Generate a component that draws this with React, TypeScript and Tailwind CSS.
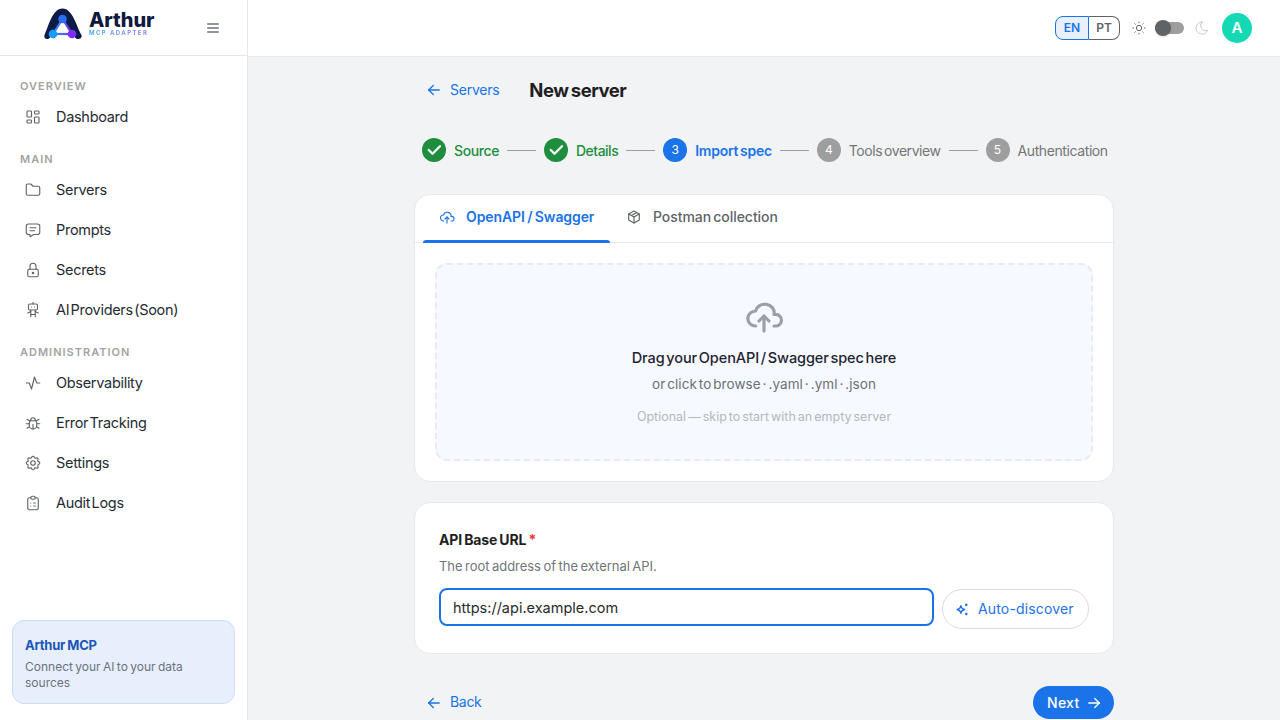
import React from 'react';
import {
  TbLayoutDashboard,
  TbFolder,
  TbMessage,
  TbLock,
  TbRobot,
  TbActivity,
  TbBug,
  TbSettings,
  TbClipboardList,
  TbMenu2,
  TbSun,
  TbMoon,
  TbArrowLeft,
  TbArrowRight,
  TbCheck,
  TbCloudUpload,
  TbPackage,
} from 'react-icons/tb';

const font = "font-['Inter','Liberation_Sans',sans-serif]";

const navSections = [
  { label: 'OVERVIEW', items: [{ icon: TbLayoutDashboard, name: 'Dashboard' }] },
  {
    label: 'MAIN',
    items: [
      { icon: TbFolder, name: 'Servers' },
      { icon: TbMessage, name: 'Prompts' },
      { icon: TbLock, name: 'Secrets' },
      { icon: TbRobot, name: 'AI Providers (Soon)' },
    ],
  },
  {
    label: 'ADMINISTRATION',
    items: [
      { icon: TbActivity, name: 'Observability' },
      { icon: TbBug, name: 'Error Tracking' },
      { icon: TbSettings, name: 'Settings' },
      { icon: TbClipboardList, name: 'Audit Logs' },
    ],
  },
];

const Logo = () => (
  <svg width="38" height="32" viewBox="0 0 38 32" fill="none" className="self-start mt-[8px] shrink-0">
    <defs>
      <linearGradient id="tri" x1="8" y1="26" x2="29" y2="26" gradientUnits="userSpaceOnUse">
        <stop stopColor="#1a9bff" />
        <stop offset="1" stopColor="#7c2dff" />
      </linearGradient>
    </defs>
    <path
      d="M.5 27C4 20 8 .5 18.500 .5C29 .5 33 20 37.500 27C38.500 30 35 32 32 30.500L28 27H9L5 30.500C2 32-.5 30 .5 27Z"
      fill="#0f1b47"
    />
    <path d="M18.500 11L28 26H9Z" fill="#fff" stroke="url(#tri)" strokeWidth="2.200" strokeLinejoin="round" />
    <path d="M5 31L9 26H28L32 31Z" fill="#fff" />
    <path d="M9 26H28" stroke="url(#tri)" strokeWidth="2.200" />
    <circle cx="18.500" cy="11" r="4.300" fill="#2b6ff0" />
    <circle cx="9" cy="26" r="4.300" fill="#1a9bff" />
    <circle cx="28" cy="26" r="4.300" fill="#7c2dff" />
  </svg>
);

const Sidebar = () => (
  <aside className="w-[248px] shrink-0 h-screen bg-white border-r border-[#e5e7eb] flex flex-col">
    <div className="h-[56px] shrink-0 border-b border-[#e5e7eb] flex items-center pl-[44px] pr-[26px]">
      <Logo />
      <div className="ml-[7px] flex flex-col self-start mt-[11px]">
        <span className="text-[20px] leading-[18px] font-extrabold text-[#101a3f] tracking-[-0.05px]">Arthur</span>
        <span className="text-[6px] leading-[7px] font-bold tracking-[1.4px] bg-gradient-to-r from-[#38a5f5] to-[#8f7cf8] bg-clip-text text-transparent">
          MCP ADAPTER
        </span>
      </div>
      <TbMenu2 className="ml-auto text-[#6b7280]" size={16} />
    </div>
    <nav className="flex-1 pt-[22px] px-[12px]">
      {navSections.map((section) => (
        <div key={section.label} className="mb-[14px]">
          <div className="pl-[8px] h-[16px] leading-[16px] text-[11px] font-semibold tracking-[1px] text-[#a3a3a3] whitespace-nowrap">
            {section.label}
          </div>
          <div className="mt-[3px]">
            {section.items.map((item) => (
              <div key={item.name} className="h-[40px] flex items-center pl-[12px] text-[#262b33]">
                <item.icon size={18} strokeWidth={1.500} className="text-[#5f6368] shrink-0" />
                <span className="ml-[14px] text-[14.500px] tracking-[-0.3px] [word-spacing:-2.500px]">{item.name}</span>
              </div>
            ))}
          </div>
        </div>
      ))}
    </nav>
    <div className="mx-[12px] mb-[16px] h-[84px] rounded-[12px] border border-[#cfdcf8] bg-[#e8effc] px-[12px] pt-[14px]">
      <div className="text-[13px] leading-[20px] font-bold text-[#1a56b8] tracking-[-0.25px] [word-spacing:-0.500px]">Arthur MCP</div>
      <div className="mt-[4px] text-[12px] leading-[16px] text-[#6b7280] [word-spacing:-1px]">
        Connect your AI to your data sources
      </div>
    </div>
  </aside>
);

const Header = () => (
  <header className="h-[57px] shrink-0 bg-white border-b border-[#e8e9ec] flex items-center justify-end pr-[28px]">
    <div className="flex h-[24px] text-[12px] font-semibold">
      <div className="w-[34px] rounded-l-[8px] border border-[#1a73e8] bg-[#e8f0fe] text-[#1a73e8] flex items-center justify-center">
        EN
      </div>
      <div className="w-[31px] rounded-r-[8px] border border-l-0 border-[#5f6368] text-[#5f6368] flex items-center justify-center">
        PT
      </div>
    </div>
    <TbSun size={16} strokeWidth={1.500} className="ml-[11px] text-[#5f6368]" />
    <div className="relative ml-[8px] w-[29px] h-[12px] rounded-full bg-[#9e9e9e]">
      <div className="absolute left-0 -top-[2px] w-[16px] h-[16px] rounded-full bg-[#5f6368] shadow-sm" />
    </div>
    <TbMoon size={16} strokeWidth={1.500} className="ml-[10px] text-[#c8c8c8]" />
    <div className="ml-[12px] w-[30px] h-[30px] rounded-full bg-[#14d9b4] text-white text-[15px] font-semibold flex items-center justify-center">
      A
    </div>
  </header>
);

const steps = [
  { n: 1, label: 'Source', state: 'done', text: 'text-[#1e8e3e] font-medium tracking-[-0.4px]' },
  { n: 2, label: 'Details', state: 'done', text: 'text-[#1e8e3e] font-medium tracking-[-0.5px]' },
  { n: 3, label: 'Import spec', state: 'active', text: 'text-[#1a73e8] font-semibold tracking-[-0.25px]' },
  { n: 4, label: 'Tools overview', state: 'todo', text: 'text-[#757575] tracking-[-0.45px]' },
  { n: 5, label: 'Authentication', state: 'todo', text: 'text-[#757575] tracking-[-0.4px]' },
];

const Stepper = () => (
  <div className="flex items-center pl-[8px] h-[24px]">
    {steps.map((step, i) => (
      <React.Fragment key={step.n}>
        {i > 0 && <div className="w-[29px] h-px bg-[#9e9e9e] mx-[8px] shrink-0" />}
        <div
          className={`w-[24px] h-[24px] shrink-0 rounded-full text-white text-[12px] flex items-center justify-center ${
            step.state === 'done' ? 'bg-[#1e8e3e]' : step.state === 'active' ? 'bg-[#1a73e8]' : 'bg-[#9e9e9e]'
          }`}
        >
          {step.state === 'done' ? <TbCheck size={18} strokeWidth={3} /> : step.n}
        </div>
        <span className={`ml-[8px] text-[14px] whitespace-nowrap [word-spacing:-1.500px] ${step.text}`}>
          {step.label}
        </span>
      </React.Fragment>
    ))}
  </div>
);

const SparkIcon = () => (
  <svg width="15" height="15" viewBox="0 0 14 14" fill="none" stroke="#1a73e8" strokeWidth="1.300" strokeLinejoin="round">
    <path d="M5.500 3.500c.4 2.200 1.300 3.100 3.500 3.500-2.200.4-3.100 1.300-3.500 3.500-.4-2.200-1.300-3.100-3.500-3.500 2.200-.4 3.100-1.300 3.500-3.500z" />
    <path d="M10.500 1.500v2.400M9.300 2.700h2.400M10.500 10v2.400M9.300 11.200h2.400" />
  </svg>
);

export default function App() {
  return (
    <div className={`flex h-screen overflow-hidden bg-[#f1f3f5] ${font}`}>
      <Sidebar />
      <div className="flex-1 min-w-0 flex flex-col">
        <Header />
        <main className="flex-1 overflow-hidden">
          <div className="w-[700px] mx-auto pt-[20px]">
            <div className="flex items-center h-[26px] pl-[11px]">
              <TbArrowLeft size={18} strokeWidth={1.700} className="text-[#1a73e8] -mt-[1px]" />
              <span className="ml-[7px] text-[14px] text-[#1a73e8] tracking-[-0.25px] -mt-[2px]">Servers</span>
              <h1 className="ml-[30px] text-[18.500px] font-bold text-[#1f1f1f] tracking-[-0.5px] [word-spacing:-1.500px] mt-[1px]">New server</h1>
            </div>

            <div className="mt-[35px]">
              <Stepper />
            </div>

            <section className="mt-[32px] bg-white rounded-[16px] border border-[#e8e9ec] overflow-hidden">
              <div className="flex h-[48px] border-b border-[#e8e9ec] pl-[8px]">
                <div className="relative w-[187px] flex items-center pl-[16px] pb-[4px] text-[#1a73e8]">
                  <TbCloudUpload size={16} strokeWidth={1.700} />
                  <span className="ml-[11px] text-[14px] font-semibold tracking-[-0.1px] [word-spacing:-1px]">OpenAPI / Swagger</span>
                  <div className="absolute left-0 right-0 bottom-[-1px] h-[3px] rounded-t-[3px] bg-[#1a73e8]" />
                </div>
                <div className="flex items-center pl-[16px] pb-[4px] text-[#5f6368]">
                  <TbPackage size={16} strokeWidth={1.700} />
                  <span className="ml-[11px] text-[14px] font-medium tracking-[-0.05px] [word-spacing:-1.500px]">Postman collection</span>
                </div>
              </div>
              <div className="p-[20px]">
                <div className="h-[198px] rounded-[12px] border-2 border-dashed border-[#e4ebf7] bg-[#f6f9ff] flex flex-col items-center pt-[31px]">
                  <TbCloudUpload size={40} strokeWidth={1.900} className="text-[#9aa0a6]" />
                  <div className="mt-[11px] text-[14.500px] leading-[22px] font-medium text-[#1f2430] tracking-[-0.1px] [word-spacing:-2px]">
                    Drag your OpenAPI / Swagger spec here
                  </div>
                  <div className="mt-[5px] text-[13.500px] leading-[20px] text-[#6b7078] tracking-[0.08px] [word-spacing:-2px]">
                    or click to browse · .yaml · .yml · .json
                  </div>
                  <div className="mt-[14px] text-[12.500px] leading-[18px] text-[#b4b7bc] [word-spacing:-1.500px]">
                    Optional — skip to start with an empty server
                  </div>
                </div>
              </div>
            </section>

            <section className="mt-[20px] h-[152px] bg-white rounded-[16px] border border-[#e8e9ec] px-[24px] pt-[27px]">
              <div className="text-[14px] leading-[20px] font-bold text-[#1f1f1f] tracking-[-0.15px] [word-spacing:-1px]">
                API Base URL <span className="text-[#e53935]">*</span>
              </div>
              <div className="mt-[7px] text-[13px] leading-[18px] text-[#70757a] tracking-[-0.05px] [word-spacing:-1px]">
                The root address of the external API.
              </div>
              <div className="mt-[13px] flex items-start gap-[8px]">
                <div className="flex-1 h-[38px] rounded-[8px] border-2 border-[#1a73e8] flex items-center px-[12px] pt-[2px] text-[14.500px] text-[#2a2a2a]">
                  https://api.example.com
                </div>
                <div className="mt-[1px] w-[147px] h-[40px] rounded-full border border-[#dcdcdc] flex items-center pl-[12px] text-[#1a73e8]">
                  <SparkIcon />
                  <span className="ml-[8px] -mt-[2px] text-[14px] tracking-[0.15px]">Auto-discover</span>
                </div>
              </div>
            </section>

            <div className="mt-[32px] flex items-center justify-between">
              <div className="flex items-center pl-[11px] text-[#1a73e8]">
                <TbArrowLeft size={18} strokeWidth={1.700} />
                <span className="ml-[7px] -mt-[2px] text-[14px] tracking-[-0.3px]">Back</span>
              </div>
              <div className="w-[81px] h-[33px] rounded-full bg-[#1a73e8] text-white flex items-center pl-[14px] text-[14px] font-medium tracking-[0.3px]">
                Next
                <TbArrowRight size={18} strokeWidth={1.700} className="ml-[5px]" />
              </div>
            </div>
          </div>
        </main>
      </div>
    </div>
  );
}
